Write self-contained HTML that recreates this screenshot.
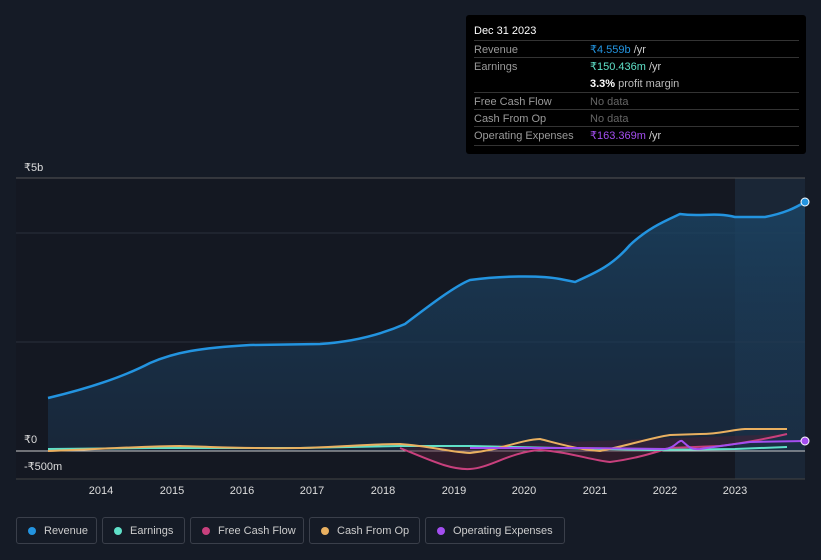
<!DOCTYPE html>
<html><head><style>
body{margin:0;background:#151b26;font-family:"Liberation Sans",sans-serif;}
.wrap{position:relative;width:821px;height:560px;overflow:hidden;background:#151b26}
.tt{position:absolute;left:466px;top:15px;width:340px;height:139px;background:#000;border-radius:3px;color:#ddd;font-size:11px}
.tt .h{position:absolute;left:8px;top:10px;color:#fff;font-size:11px}
.row{position:absolute;left:8px;width:325px;border-top:1px solid #333;height:17px;line-height:18px}
.row span.l{color:#9a9a9a;position:absolute;left:0}
.row span.v{position:absolute;left:116px;color:#9a9a9a}
.leg{position:absolute;top:517px;height:27px;border:1px solid #3a3f4a;border-radius:3px;color:#ccc;font-size:11px;line-height:27px;box-sizing:border-box;padding-left:27px}
.leg i{position:absolute;left:11px;top:9px;width:8px;height:8px;border-radius:50%}
</style></head><body><div class="wrap">
<svg width="821" height="560" style="position:absolute;left:0;top:0">
<defs><linearGradient id="g" x1="0" y1="0" x2="0" y2="1"><stop offset="0" stop-color="#1b4566" stop-opacity=".8"/><stop offset="1" stop-color="#1b3550" stop-opacity=".5"/></linearGradient></defs>
<rect x="16" y="178" width="789" height="301" fill="#141822"/>
<rect x="735" y="178" width="70" height="301" fill="#1a2636"/>
<line x1="16" y1="178" x2="805" y2="178" stroke="#555" stroke-width="1"/>
<line x1="16" y1="233" x2="805" y2="233" stroke="#2a303c"/>
<line x1="16" y1="342" x2="805" y2="342" stroke="#2a303c"/>
<path d="M48,398 C90,388 125,376 150,363 C175,352 200,348 250,345 L320,344 C350,342 380,335 405,324 C430,305 455,286 470,280 C500,276 540,275 560,279 L575,282 C595,273 612,266 630,245 C648,228 665,221 680,214 C700,217 715,212 735,217 L765,217 C785,213 795,208 805,202 L805,451 L48,451 Z" fill="url(#g)"/>
<path d="M48,398 C90,388 125,376 150,363 C175,352 200,348 250,345 L320,344 C350,342 380,335 405,324 C430,305 455,286 470,280 C500,276 540,275 560,279 L575,282 C595,273 612,266 630,245 C648,228 665,221 680,214 C700,217 715,212 735,217 L765,217 C785,213 795,208 805,202" fill="none" stroke="#2394e0" stroke-width="2.5"/>
<line x1="16" y1="451" x2="805" y2="451" stroke="#ccc" stroke-width="1"/>
<line x1="16" y1="479" x2="805" y2="479" stroke="#444"/>
<path d="M400,448 C430,460 450,470 470,469 C490,468 510,452 540,450 C570,452 590,460 610,462 C640,458 655,452 670,448 L720,446 C750,442 770,438 787,434" fill="#4a1f33" fill-opacity=".5" stroke="#c8407d" stroke-width="2"/>
<path d="M48,449 L150,448 L300,448 L400,446 L470,446 L560,448 L650,450 L735,449 L787,447" fill="none" stroke="#5fe0c8" stroke-width="2"/>
<path d="M48,451 C100,449 150,446 180,446 C220,447 250,449 300,448 C340,447 370,444 400,444 C430,446 450,452 470,453 C500,450 520,440 540,439 C560,444 580,450 600,451 C630,445 650,438 670,435 L700,434 C720,434 730,430 745,429 L787,429" fill="none" stroke="#e9b060" stroke-width="2"/>
<path d="M470,448 L580,448 L665,449 C675,448 678,440 682,441 C688,446 690,450 700,449 C720,446 735,444 750,442 L805,441" fill="none" stroke="#a34ef0" stroke-width="2"/>
<circle cx="805" cy="202" r="4" fill="#2394e0" stroke="#fff" stroke-width="1"/>
<circle cx="805" cy="441" r="4" fill="#a34ef0" stroke="#fff" stroke-width="1"/>
<g fill="#ddd" font-size="11" font-family="Liberation Sans">
<text x="24" y="171">₹5b</text><text x="24" y="443">₹0</text><text x="24" y="470">-₹500m</text>
<g text-anchor="middle"><text x="101" y="494">2014</text><text x="172" y="494">2015</text><text x="242" y="494">2016</text><text x="312" y="494">2017</text><text x="383" y="494">2018</text><text x="454" y="494">2019</text><text x="524" y="494">2020</text><text x="595" y="494">2021</text><text x="665" y="494">2022</text><text x="735" y="494">2023</text></g>
</g></svg>
<div class="tt"><div class="h">Dec 31 2023</div>
<div class="row" style="top:25px"><span class="l">Revenue</span><span class="v"><b style="color:#2394e0;font-weight:normal">₹4.559b</b> <span style="color:#ccc">/yr</span></span></div>
<div class="row" style="top:42px"><span class="l">Earnings</span><span class="v"><b style="color:#5fe0c8;font-weight:normal">₹150.436m</b> <span style="color:#ccc">/yr</span></span></div>
<div class="row" style="top:60px;border-top:none"><span class="v"><b style="color:#fff">3.3%</b> <span style="color:#bbb">profit margin</span></span></div>
<div class="row" style="top:77px"><span class="l">Free Cash Flow</span><span class="v" style="color:#666">No data</span></div>
<div class="row" style="top:94px"><span class="l">Cash From Op</span><span class="v" style="color:#666">No data</span></div>
<div class="row" style="top:111px"><span class="l">Operating Expenses</span><span class="v"><b style="color:#a34ef0;font-weight:normal">₹163.369m</b> <span style="color:#ccc">/yr</span></span></div>
<div class="row" style="top:130px;height:0"></div>
</div>
<div class="leg" style="left:16px;width:81px"><i style="background:#2394e0"></i>Revenue</div>
<div class="leg" style="left:102px;width:83px"><i style="background:#5fe0c8"></i>Earnings</div>
<div class="leg" style="left:190px;width:114px"><i style="background:#c8407d"></i>Free Cash Flow</div>
<div class="leg" style="left:309px;width:111px"><i style="background:#e9b060"></i>Cash From Op</div>
<div class="leg" style="left:425px;width:140px"><i style="background:#a34ef0"></i>Operating Expenses</div>
</div></body></html>
